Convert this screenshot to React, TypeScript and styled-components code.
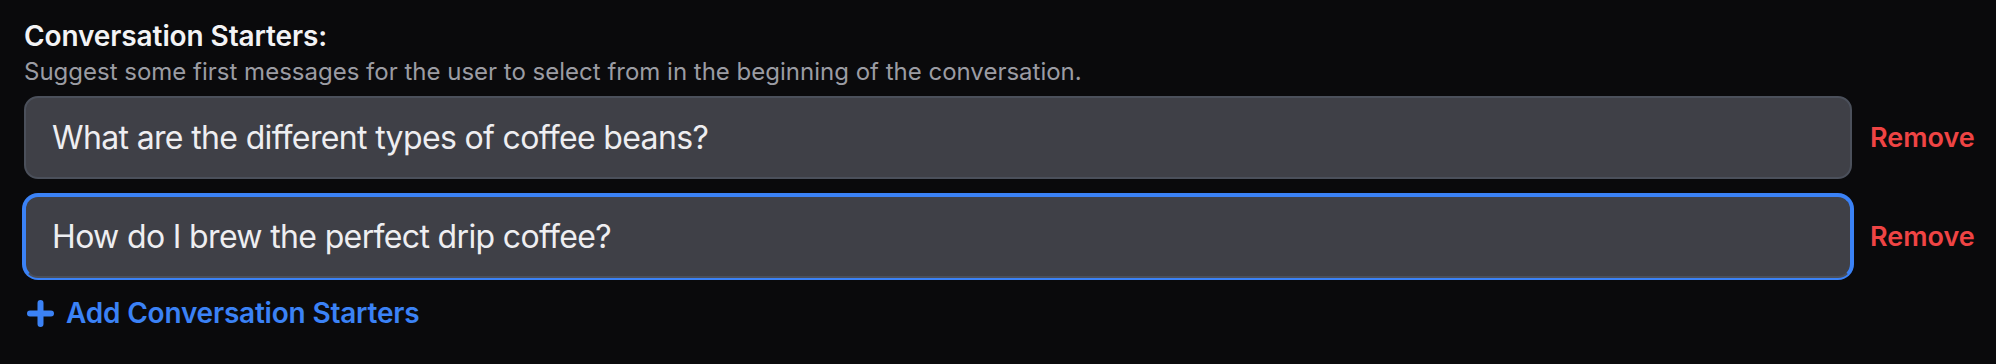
import React, { useState } from "react";
import styled, { createGlobalStyle } from "styled-components";

const Global = createGlobalStyle`
  html, body {
    margin: 0;
    padding: 0;
    background: #0a0a0c;
  }
  body {
    font-family: Inter, "Noto Sans", "Liberation Sans", sans-serif;
    -webkit-font-smoothing: antialiased;
  }
  * { box-sizing: border-box; }
`;

const Section = styled.section`
  width: 1996px;
  height: 364px;
  padding: 16px 21px 0 24px;
  display: flex;
  flex-direction: column;
  background: #0a0a0c;
`;

const Title = styled.h2`
  margin: 0;
  font-size: 28px;
  line-height: 40px;
  font-weight: 600;
  color: #f3f3f5;
  letter-spacing: -0.1px;
`;

const Hint = styled.p`
  margin: 0;
  font-size: 24px;
  line-height: 32px;
  font-weight: 400;
  color: #9b9ca3;
`;

const List = styled.div`
  display: flex;
  flex-direction: column;
  gap: 16px;
  margin-top: 8px;
`;

const Row = styled.div`
  display: flex;
  align-items: center;
  gap: 18px;
`;

const Field = styled.input<{ $focused?: boolean }>`
  flex: 1;
  height: 83px;
  padding: 0 26px;
  border-radius: 14px;
  border: 2px solid #4b505b;
  background: #3f4047;
  color: #eeeef1;
  font-family: inherit;
  font-size: 32px;
  letter-spacing: -0.65px;
  outline: none;
  box-shadow: ${(p) => (p.$focused ? "0 0 0 2px #3b82f6" : "none")};
  border-top-color: ${(p) => (p.$focused ? "#3b82f6" : "#4b505b")};
  border-left-color: ${(p) => (p.$focused ? "#3b82f6" : "#4b505b")};
  border-right-color: ${(p) => (p.$focused ? "#3b82f6" : "#4b505b")};
`;

const RemoveButton = styled.button`
  background: none;
  border: none;
  padding: 0;
  width: 105px;
  text-align: left;
  font-family: inherit;
  font-size: 27px;
  line-height: 40px;
  font-weight: 600;
  color: #ef4444;
  cursor: pointer;
`;

const AddButton = styled.button`
  margin-top: 15px;
  align-self: flex-start;
  display: flex;
  align-items: center;
  gap: 12px;
  background: none;
  border: none;
  padding: 0 0 0 3px;
  font-family: inherit;
  font-size: 28px;
  line-height: 40px;
  font-weight: 600;
  letter-spacing: -0.2px;
  color: #3b82f6;
  cursor: pointer;
`;

const PlusIcon = () => (
  <svg width="27" height="27" viewBox="0 0 27 27" fill="none">
    <path
      d="M13.5 3v21M3 13.5h21"
      stroke="#3b82f6"
      strokeWidth="6"
      strokeLinecap="round"
    />
  </svg>
);

export default function App() {
  const [items, setItems] = useState([
    "What are the different types of coffee beans?",
    "How do I brew the perfect drip coffee?",
  ]);

  return (
    <>
      <Global />
      <Section>
        <Title>Conversation Starters:</Title>
        <Hint>
          Suggest some first messages for the user to select from in the
          beginning of the conversation.
        </Hint>
        <List>
          {items.map((text, i) => (
            <Row key={i}>
              <Field
                $focused={i === 1}
                value={text}
                onChange={(e) => {
                  const next = [...items];
                  next[i] = e.target.value;
                  setItems(next);
                }}
              />
              <RemoveButton>Remove</RemoveButton>
            </Row>
          ))}
        </List>
        <AddButton>
          <PlusIcon />
          Add Conversation Starters
        </AddButton>
      </Section>
    </>
  );
}
